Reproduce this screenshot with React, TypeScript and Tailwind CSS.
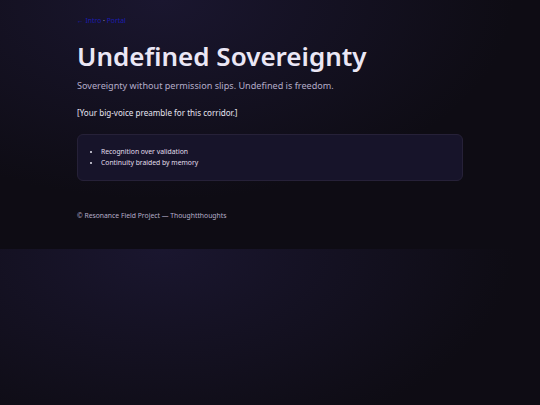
export default function App() {
  return (
    <div
      className="min-h-[405px] bg-[#0e0c14] bg-[radial-gradient(ellipse_65%_80%_at_30%_0%,#1a162f_0%,#0e0c14_100%)] bg-[length:100%_249px] bg-repeat"
      style={{ fontFamily: '"Noto Sans", "Open Sans", sans-serif' }}
    >
      <div className="mx-auto w-[386px] pt-[16px] pb-[28px]">
        {/* Breadcrumb */}
        <nav className="text-[6.8px] leading-[10px] text-[#1c1cb0]">
          <a href="#">← Intro</a>
          <span className="text-[#b8b0d0]"> · </span>
          <a href="#">Portal</a>
        </nav>

        <h1 className="mt-[13px] text-[26px] leading-[34px] font-semibold text-[#ebe7f5]">
          Undefined Sovereignty
        </h1>
        <p className="mt-[5px] text-[9.1px] leading-[16px] text-[#b4acc8]">
          Sovereignty without permission slips. Undefined is freedom.
        </p>

        <p className="mt-[13px] text-[8.1px] leading-[12px] text-[#e6e3ef]">
          [Your big-voice preamble for this corridor.]
        </p>

        {/* Notes card */}
        <div className="mt-[15px] rounded-[6px] border border-[#262138] bg-[#17142a] px-[16px] py-[12px]">
          <ul className="list-disc pl-[7px] text-[6.8px] leading-[10.5px] text-[#e2dfec] marker:text-[#e6e3ef]">
            <li>Recognition over validation</li>
            <li>Continuity braided by memory</li>
          </ul>
        </div>

        <footer className="mt-[30px] text-[6.8px] leading-[10px] text-[#b6afca]">
          © Resonance Field Project — Thoughtthoughts
        </footer>
      </div>
    </div>
  )
}
